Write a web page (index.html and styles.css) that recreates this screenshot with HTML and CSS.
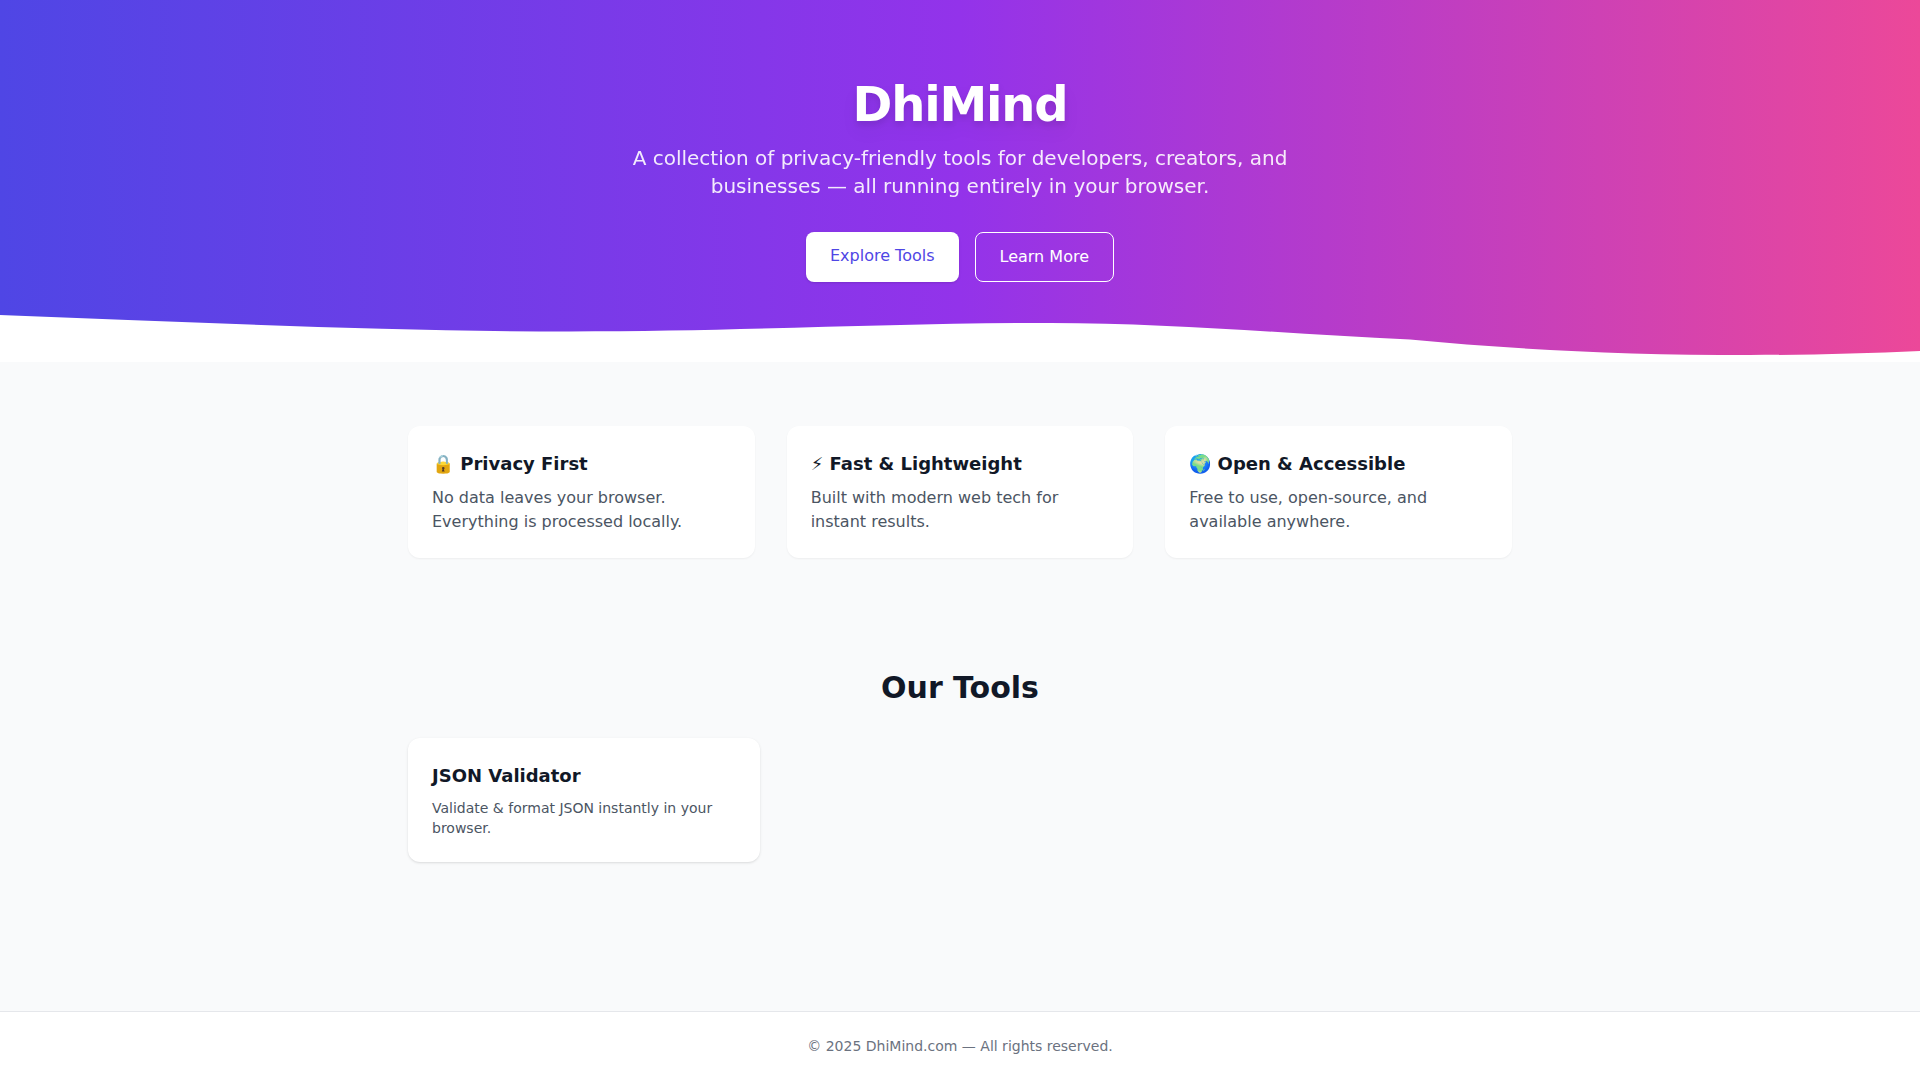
FILE: index.html
```
<!DOCTYPE html>
<html lang="en">
<head>
    <meta charset="UTF-8">
    <meta name="viewport" content="width=device-width, initial-scale=1.0">
    <title>DhiMind</title>
    <link rel="stylesheet" href="styles.css">
</head>
<body>
    <header class="hero">
        <div class="hero-content">
            <h1>DhiMind</h1>
            <p class="tagline">A collection of privacy-friendly tools for developers, creators, and businesses — all running entirely in your browser.</p>
            <div class="hero-actions">
                <a href="#tools" class="btn btn-primary">Explore Tools</a>
                <a href="#features" class="btn btn-outline">Learn More</a>
            </div>
        </div>

        <!-- Wave divider -->
        <svg class="wave" viewBox="0 0 1920 48" preserveAspectRatio="none" aria-hidden="true">
            <path fill="#ffffff" d="M0,1 C190,8 380,17.5 570,17.5 C740,17.5 890,9 1050,9 C1170,9 1290,20 1410,25.5 C1510,35 1620,41 1750,41 C1810,41 1865,39.5 1920,37 V48 H0 Z"/>
        </svg>
    </header>

    <section id="features" class="features">
        <div class="feature-card">
            <h3>🔒 Privacy First</h3>
            <p>No data leaves your browser. Everything is processed locally.</p>
        </div>
        <div class="feature-card">
            <h3>⚡ Fast &amp; Lightweight</h3>
            <p>Built with modern web tech for instant results.</p>
        </div>
        <div class="feature-card">
            <h3>🌍 Open &amp; Accessible</h3>
            <p>Free to use, open-source, and available anywhere.</p>
        </div>
    </section>

    <main id="tools" class="tools">
        <h2>Our Tools</h2>
        <div class="tool-grid">
            <a href="#json-validator" class="tool-card">
                <h3>JSON Validator</h3>
                <p>Validate &amp; format JSON instantly in your browser.</p>
            </a>
        </div>
    </main>

    <footer class="footer">
        <p>© 2025 DhiMind.com — All rights reserved.</p>
    </footer>
</body>
</html>
```
FILE: styles.css
```
:root {
    --indigo: #4f46e5;
    --purple: #9333ea;
    --pink: #ec4899;
    --page-bg: #f9fafb;
    --heading: #111827;
    --text: #4b5563;
    --muted: #6b7280;
    --border: #e5e7eb;
}

* {
    margin: 0;
    padding: 0;
    box-sizing: border-box;
}

body {
    font-family: "DejaVu Sans", sans-serif;
    font-size: 16px;
    line-height: 24px;
    color: var(--heading);
    background-color: var(--page-bg);
    min-height: 100vh;
    display: flex;
    flex-direction: column;
}

a {
    color: inherit;
    text-decoration: none;
}

/* Hero */
.hero {
    position: relative;
    padding: 80px 24px;
    color: white;
    text-align: center;
    background: linear-gradient(to right, var(--indigo), var(--purple), var(--pink));
}

.hero-content {
    position: relative;
    z-index: 1;
}

.hero h1 {
    font-size: 48px;
    line-height: 48px;
    font-weight: 700;
    margin-bottom: 16px;
    letter-spacing: -0.025em;
    filter: drop-shadow(0 10px 8px rgba(0, 0, 0, 0.04)) drop-shadow(0 4px 3px rgba(0, 0, 0, 0.1));
}

.tagline {
    max-width: 672px;
    margin: 0 auto 32px;
    font-size: 20px;
    line-height: 28px;
    opacity: 0.9;
}

.hero-actions {
    display: flex;
    justify-content: center;
    gap: 16px;
}

.btn {
    padding: 12px 24px;
    border-radius: 8px;
}

.btn-primary {
    color: var(--indigo);
    background-color: white;
    box-shadow: 0 1px 3px rgba(0, 0, 0, 0.1), 0 1px 2px -1px rgba(0, 0, 0, 0.1);
}

.btn-outline {
    border: 1px solid white;
}

.wave {
    position: absolute;
    left: 0;
    bottom: 0;
    width: 100%;
    height: 48px;
}

/* Features */
.features {
    width: 100%;
    max-width: 1152px;
    margin: 0 auto;
    padding: 64px 24px;
    display: grid;
    grid-template-columns: repeat(auto-fit, minmax(280px, 1fr));
    gap: 32px;
}

.feature-card {
    padding: 24px;
    border-radius: 12px;
    background-color: white;
    box-shadow: 0 1px 2px rgba(0, 0, 0, 0.05);
}

h3 {
    font-size: 18px;
    line-height: 28px;
    font-weight: 600;
    margin-bottom: 8px;
}

.feature-card p {
    color: var(--text);
}

/* Tools */
.tools {
    flex: 1;
    width: 100%;
    max-width: 1152px;
    margin: 0 auto;
    padding: 48px 24px;
}

.tools h2 {
    font-size: 30px;
    line-height: 36px;
    font-weight: 700;
    text-align: center;
    margin-bottom: 32px;
}

.tool-grid {
    display: grid;
    grid-template-columns: repeat(auto-fill, minmax(320px, 1fr));
    gap: 24px;
}

.tool-card {
    padding: 24px;
    border-radius: 12px;
    background-color: white;
    box-shadow: 0 1px 3px rgba(0, 0, 0, 0.1), 0 1px 2px -1px rgba(0, 0, 0, 0.1);
}

.tool-card p {
    font-size: 14px;
    line-height: 20px;
    color: var(--text);
}

/* Footer */
.footer {
    padding: 24px;
    border-top: 1px solid var(--border);
    background-color: white;
    color: var(--muted);
    font-size: 14px;
    line-height: 20px;
    text-align: center;
}
```
